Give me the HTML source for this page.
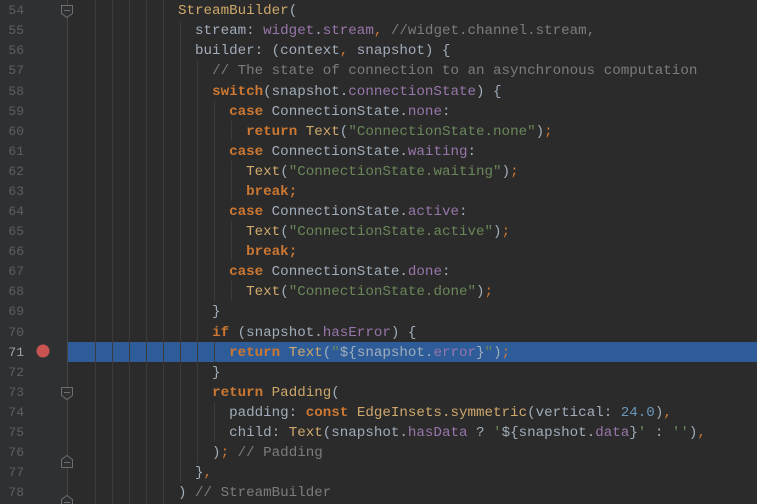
<!DOCTYPE html>
<html><head><meta charset="utf-8"><style>
html,body{margin:0;padding:0;width:757px;height:504px;overflow:hidden;background:#2b2b2b;}
#g{position:absolute;left:0;top:0;width:67px;height:504px;background:#2f3032;}
.ln{position:absolute;left:0;width:24px;text-align:right;font:13px "Liberation Mono",monospace;color:#5c5f62;}
.v{position:absolute;width:1px;background:#3b3b3b;}
.row{position:absolute;left:178px;white-space:pre;font:14.2px "Liberation Mono",monospace;color:#a1adba;line-height:20px;}
.k{color:#cc7832;font-weight:bold}
.c{color:#cfa86c}
.s{color:#6a8759}
.p{color:#9876aa}
.m{color:#7c7c7c}
.o{color:#cc7832}
.n{color:#6897bb}
#hl{position:absolute;left:67px;top:342px;width:690px;height:20px;background:#2d5c99;}
</style></head><body>
<div id="g"></div>
<div id="hl"></div>
<div class="v" style="left:67px;top:0;height:504px;background:#454545"></div>
<div class="v" style="left:95px;top:0;height:504px"></div>
<div class="v" style="left:112px;top:0;height:504px"></div>
<div class="v" style="left:129px;top:0;height:504px"></div>
<div class="v" style="left:146px;top:0;height:504px"></div>
<div class="v" style="left:163px;top:0;height:504px"></div>
<div class="v" style="left:180px;top:21px;height:462px"></div>
<div class="v" style="left:197px;top:61px;height:402px"></div>
<div class="v" style="left:214px;top:101px;height:201px"></div>
<div class="v" style="left:214px;top:342px;height:20px"></div>
<div class="v" style="left:214px;top:402px;height:40px"></div>
<div class="v" style="left:231px;top:121px;height:20px"></div>
<div class="v" style="left:231px;top:161px;height:40px"></div>
<div class="v" style="left:231px;top:221px;height:40px"></div>
<div class="v" style="left:231px;top:281px;height:20px"></div>
<svg style="position:absolute;left:0;top:0" width="757" height="504">
<g fill="#2f3032" stroke="#6e6e6e" stroke-width="1">
<path d="M61.5 5.5h11v8l-5.5 4l-5.5-4z"/><path d="M64 10.5h6"/>
<path d="M61.5 387.5h11v8l-5.5 4l-5.5-4z"/><path d="M64 392.5h6"/>
<path d="M61.5 459.5l5.5-4l5.5 4v8h-11z"/><path d="M64 462.5h6"/>
<path d="M61.5 499.5l5.5-4l5.5 4v8h-11z"/><path d="M64 502.5h6"/>
</g>
<circle cx="43" cy="351" r="6.5" fill="#c75450"/>
</svg>
<div class="ln" style="top:3px">54</div><div class="ln" style="top:23px">55</div><div class="ln" style="top:43px">56</div><div class="ln" style="top:63px">57</div><div class="ln" style="top:84px">58</div><div class="ln" style="top:104px">59</div><div class="ln" style="top:124px">60</div><div class="ln" style="top:144px">61</div><div class="ln" style="top:164px">62</div><div class="ln" style="top:184px">63</div><div class="ln" style="top:204px">64</div><div class="ln" style="top:224px">65</div><div class="ln" style="top:244px">66</div><div class="ln" style="top:264px">67</div><div class="ln" style="top:284px">68</div><div class="ln" style="top:304px">69</div><div class="ln" style="top:325px">70</div><div class="ln" style="top:345px;color:#a4a3a3">71</div><div class="ln" style="top:365px">72</div><div class="ln" style="top:385px">73</div><div class="ln" style="top:405px">74</div><div class="ln" style="top:425px">75</div><div class="ln" style="top:445px">76</div><div class="ln" style="top:465px">77</div><div class="ln" style="top:485px">78</div>
<div class="row" style="top:1px"><span class="c">StreamBuilder</span>(</div>
<div class="row" style="top:21px">  stream: <span class="p">widget</span>.<span class="p">stream</span><span class="o">,</span> <span class="m">//widget.channel.stream,</span></div>
<div class="row" style="top:41px">  builder: (context<span class="o">,</span> snapshot) {</div>
<div class="row" style="top:61px">    <span class="m">// The state of connection to an asynchronous computation</span></div>
<div class="row" style="top:82px">    <span class="k">switch</span>(snapshot.<span class="p">connectionState</span>) {</div>
<div class="row" style="top:102px">      <span class="k">case</span> ConnectionState.<span class="p">none</span>:</div>
<div class="row" style="top:122px">        <span class="k">return</span> <span class="c">Text</span>(<span class="s">"ConnectionState.none"</span>)<span class="o">;</span></div>
<div class="row" style="top:142px">      <span class="k">case</span> ConnectionState.<span class="p">waiting</span>:</div>
<div class="row" style="top:162px">        <span class="c">Text</span>(<span class="s">"ConnectionState.waiting"</span>)<span class="o">;</span></div>
<div class="row" style="top:182px">        <span class="k">break;</span></div>
<div class="row" style="top:202px">      <span class="k">case</span> ConnectionState.<span class="p">active</span>:</div>
<div class="row" style="top:222px">        <span class="c">Text</span>(<span class="s">"ConnectionState.active"</span>)<span class="o">;</span></div>
<div class="row" style="top:242px">        <span class="k">break;</span></div>
<div class="row" style="top:262px">      <span class="k">case</span> ConnectionState.<span class="p">done</span>:</div>
<div class="row" style="top:282px">        <span class="c">Text</span>(<span class="s">"ConnectionState.done"</span>)<span class="o">;</span></div>
<div class="row" style="top:302px">    }</div>
<div class="row" style="top:323px">    <span class="k">if</span> (snapshot.<span class="p">hasError</span>) {</div>
<div class="row" style="top:343px">      <span class="k">return</span> <span class="c">Text</span>(<span class="s">"</span>${snapshot.<span class="p">error</span>}<span class="s">"</span>)<span class="o">;</span></div>
<div class="row" style="top:363px">    }</div>
<div class="row" style="top:383px">    <span class="k">return</span> <span class="c">Padding</span>(</div>
<div class="row" style="top:403px">      padding: <span class="k">const</span> <span class="c">EdgeInsets.symmetric</span>(vertical: <span class="n">24.0</span>)<span class="o">,</span></div>
<div class="row" style="top:423px">      child: <span class="c">Text</span>(snapshot.<span class="p">hasData</span> ? <span class="s">'</span>${snapshot.<span class="p">data</span>}<span class="s">'</span> : <span class="s">''</span>)<span class="o">,</span></div>
<div class="row" style="top:443px">    )<span class="o">;</span> <span class="m">// Padding</span></div>
<div class="row" style="top:463px">  }<span class="o">,</span></div>
<div class="row" style="top:483px">) <span class="m">// StreamBuilder</span></div>
</body></html>
